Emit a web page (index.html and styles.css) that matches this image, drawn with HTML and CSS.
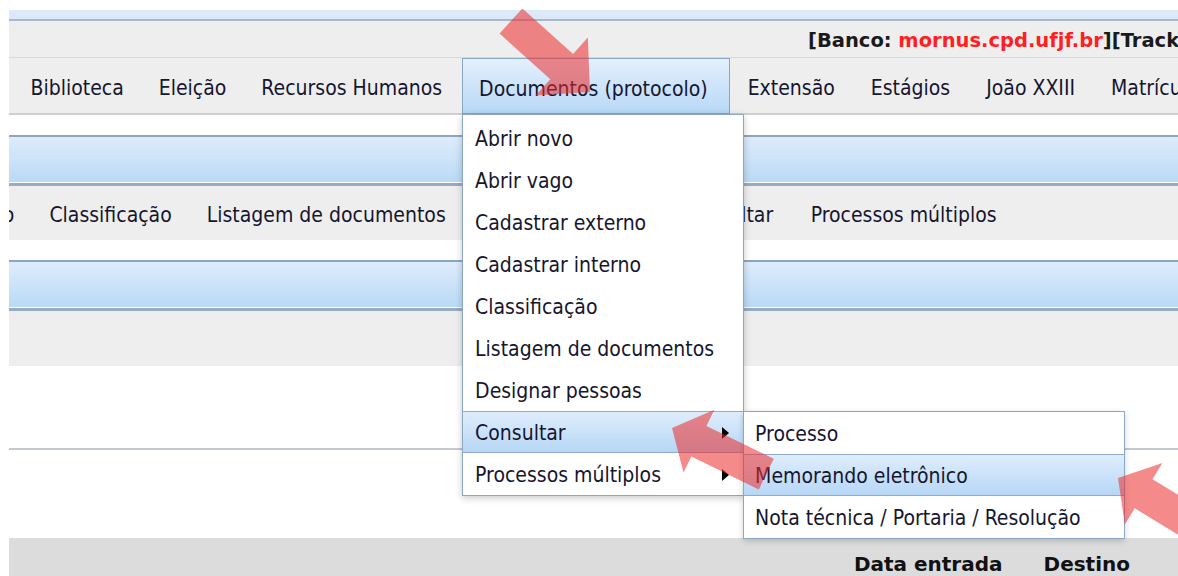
FILE: index.html
```html
<!DOCTYPE html>
<html lang="pt-BR">
<head>
<meta charset="utf-8">
<title>Documentos (protocolo)</title>
<link rel="stylesheet" href="styles.css">
</head>
<body>
<div class="page">
  <div class="topband"></div>

  <div class="infobar">
    <span>[Banco: <span class="host">mornus.cpd.ufjf.br</span>][Tracking: desativado]</span>
  </div>

  <nav class="menubar">
    <div class="mitem">Biblioteca</div>
    <div class="mitem">Eleição</div>
    <div class="mitem">Recursos Humanos</div>
    <div class="mitem active">Documentos (protocolo)
      <ul class="dropdown">
        <li class="ditem">Abrir novo</li>
        <li class="ditem">Abrir vago</li>
        <li class="ditem">Cadastrar externo</li>
        <li class="ditem">Cadastrar interno</li>
        <li class="ditem">Classificação</li>
        <li class="ditem">Listagem de documentos</li>
        <li class="ditem">Designar pessoas</li>
        <li class="ditem hover">Consultar<span class="caret"></span>
          <ul class="dropdown sub">
            <li class="ditem">Processo</li>
            <li class="ditem hover">Memorando eletrônico</li>
            <li class="ditem">Nota técnica / Portaria / Resolução</li>
          </ul>
        </li>
        <li class="ditem">Processos múltiplos<span class="caret"></span></li>
      </ul>
    </div>
    <div class="mitem wide">Extensão</div>
    <div class="mitem wide">Estágios</div>
    <div class="mitem wide">João XXIII</div>
    <div class="mitem wide">Matrícula</div>
  </nav>

  <div class="gap"></div>
  <div class="panel-head"></div>
  <div class="subbar">
    <div class="subtrack">
      <div class="sitem">Cadastrar interno</div>
      <div class="sitem">Classificação</div>
      <div class="sitem">Listagem de documentos</div>
      <div class="sitem">Designar pessoas</div>
      <div class="sitem">Consultar</div>
      <div class="sitem">Processos múltiplos</div>
    </div>
  </div>

  <div class="gap"></div>
  <div class="panel-head"></div>
  <div class="subbar tall"></div>

  <div class="blank upper"></div>
  <div class="rule"></div>
  <div class="blank lower"></div>

  <div class="table-head">
    <span>Data entrada</span>
    <span>Destino</span>
  </div>
</div>

<svg class="marks" width="1178" height="576" viewBox="0 0 1178 576">
  <polygon points="499.6,33.6 550.3,79.3 535.6,95.6 590,92 587.8,37.6 573.1,54 522.4,8.4"/>
  <polygon points="773.8,458.8 706.4,425.9 714.3,409.8 672,428 683.5,472.6 691.4,456.5 758.8,489.4"/>
  <polygon points="1263.4,547 1152.5,479.2 1162.4,463 1118,478 1124.8,524.4 1134.7,508.2 1245.6,576"/>
</svg>
</body>
</html>
```

FILE: styles.css
```css
* {
  box-sizing: border-box;
}

html,
body {
  margin: 0;
  padding: 0;
  overflow: hidden;
  background: #ffffff;
}

body {
  position: relative;
  width: 1178px;
  height: 576px;
  font-family: "DejaVu Sans Condensed", "DejaVu Sans", sans-serif;
  font-stretch: condensed;
  font-size: 21px;
  color: #16162e;
}

.page {
  width: 1178px;
  padding: 10px 0 0 9px;
}

/* window chrome strip */
.topband {
  height: 11px;
  background: #dce9f8;
  border-bottom: 2px solid #a9b8c9;
}

/* database / session info */
.infobar {
  height: 37px;
  display: flex;
  align-items: center;
  padding: 2px 0 0 799px;
  white-space: nowrap;
  background: #eeeeee;
  border-bottom: 1px solid #d8d8d8;
  font-family: "DejaVu Sans", sans-serif;
  font-stretch: normal;
  font-weight: bold;
  font-size: 19.5px;
  color: #1a1a1a;
}

.host {
  color: #ff1f1f;
}

/* main menu */
.menubar {
  height: 57px;
  display: flex;
  padding-left: 4px;
  background: #eeeeee;
  border-bottom: 2px solid #cfcfcf;
  white-space: nowrap;
}

.mitem {
  display: flex;
  align-items: center;
  padding: 5px 17.5px 0;
}

.mitem.wide {
  padding: 5px 18px 0;
}

.mitem.active {
  position: relative;
  align-self: flex-start;
  height: 56px;
  margin-left: 2.5px;
  padding: 5px 21px 0 16px;
  border: 1px solid #8aa4c3;
  background: linear-gradient(#e4f0fd, #b8d8f7);
  z-index: 2;
}

/* dropdown menus */
.dropdown {
  position: absolute;
  top: calc(100% + 1px);
  left: -1px;
  width: 282px;
  margin: 0;
  padding: 2px 0 0;
  list-style: none;
  background: #ffffff;
  border: 1px solid #8ca7c6;
  box-shadow: 0 2px 7px rgba(0, 0, 0, 0.22);
}

.ditem {
  position: relative;
  height: 42px;
  display: flex;
  align-items: center;
  padding: 2px 0 0 12px;
}

.ditem.hover {
  background: linear-gradient(#e0eefd, #b6d6f6);
  box-shadow: inset 0 1px 0 #8eacce, inset 0 -1px 0 #8eacce;
}

.caret {
  width: 0;
  height: 0;
  margin-left: auto;
  margin-right: 14px;
  border-left: 7px solid #000000;
  border-top: 6px solid transparent;
  border-bottom: 6px solid transparent;
}

.dropdown.sub {
  top: 0;
  left: 100%;
  width: 382px;
  padding: 0;
  box-shadow: 0 2px 6px rgba(0, 0, 0, 0.18);
}

.dropdown.sub .ditem {
  padding-left: 11px;
}

/* page panels */
.gap {
  height: 20px;
}

.panel-head {
  height: 51px;
  border-top: 2px solid #8da6c0;
  border-bottom: 3px solid #97abc1;
  background: linear-gradient(#deecfc, #b9d9f6);
  box-shadow: inset 0 -1px 0 #ffffff;
}

.subbar {
  height: 54px;
  display: flex;
  align-items: center;
  overflow: hidden;
  background: #eeeeee;
}

.subbar.tall {
  height: 55px;
}

.subtrack {
  display: flex;
  margin-left: -178px;
  padding-top: 3px;
  white-space: nowrap;
}

.sitem {
  padding: 0 17.5px;
}

.sitem:last-child {
  padding-left: 20px;
}

.blank.upper {
  height: 82px;
}

.rule {
  height: 2px;
  background: #c3c8d1;
}

.blank.lower {
  height: 88px;
}

.table-head {
  height: 60px;
  display: flex;
  justify-content: flex-end;
  gap: 41px;
  padding: 14px 48px 0 0;
  background: #dcdcdc;
  font-family: "DejaVu Sans", sans-serif;
  font-stretch: normal;
  font-weight: bold;
  font-size: 20px;
  color: #111111;
}

/* highlight arrows drawn over the page */
.marks {
  position: absolute;
  top: 0;
  left: 0;
  pointer-events: none;
  z-index: 10;
}

.marks polygon {
  fill: #eb2a2a;
  fill-opacity: 0.55;
}
```
